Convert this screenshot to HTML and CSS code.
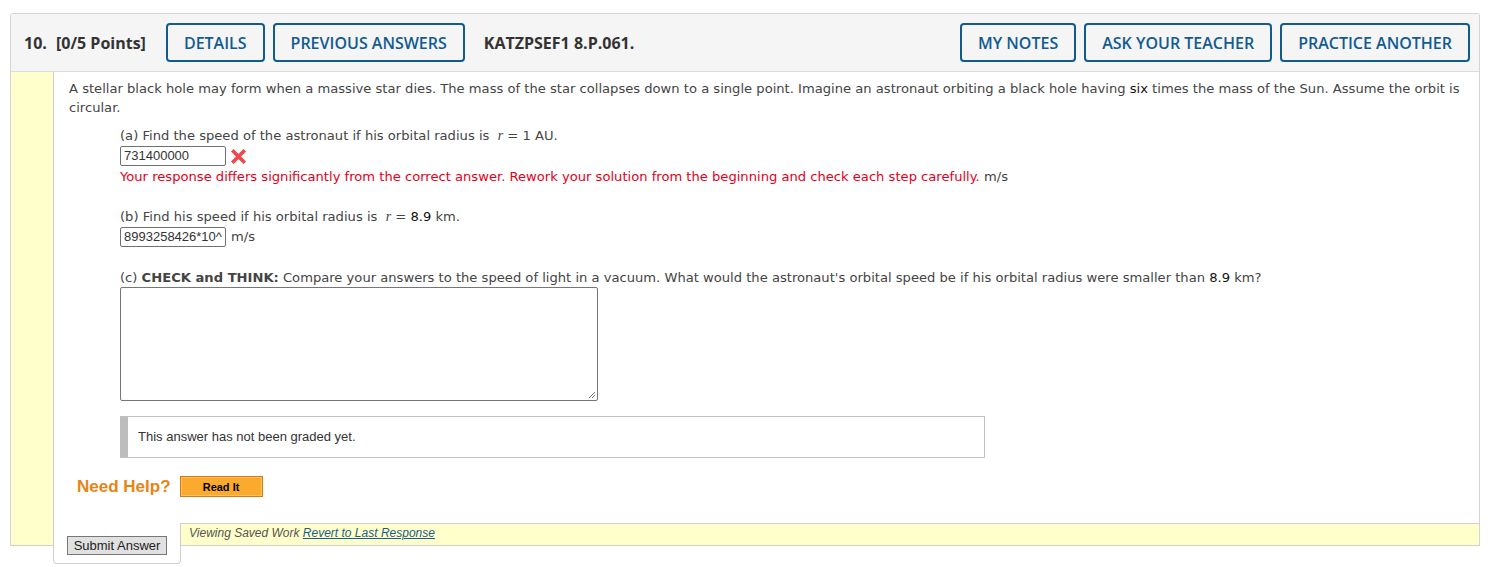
FILE: index.html
```html
<!DOCTYPE html>
<html>
<head>
<meta charset="utf-8">
<link rel="stylesheet" href="styles.css">
</head>
<body>
<div class="card">
  <div class="head">
    <div class="qnum">10.</div>
    <div class="points">[0/5 Points]</div>
    <button class="hbtn">DETAILS</button>
    <button class="hbtn">PREVIOUS ANSWERS</button>
    <div class="code">KATZPSEF1 8.P.061.</div>
    <div class="spacer"></div>
    <button class="hbtn">MY NOTES</button>
    <button class="hbtn">ASK YOUR TEACHER</button>
    <button class="hbtn">PRACTICE ANOTHER</button>
  </div>
  <div class="body">
    <div class="strip"></div>
    <div class="main">
      <div class="content">
        <p class="intro">A stellar black hole may form when a massive star dies. The mass of the star collapses down to a single point. Imagine an astronaut orbiting a black hole having <b class="val">six</b> times the mass of the Sun. Assume the orbit is circular.</p>
        <div class="part">
          <div class="line">(a) Find the speed of the astronaut if his orbital radius is &nbsp;<i class="var">r</i> = 1 AU.</div>
          <div class="answer">
            <span class="inp">731400000</span>
            <svg class="xicon" width="15" height="15" viewBox="0 0 15 15"><path d="M2.5 2.5 L12.5 12.5 M12.5 2.5 L2.5 12.5" stroke="#f0484a" stroke-width="3.6" stroke-linecap="square"/></svg>
          </div>
          <div class="err">Your response differs significantly from the correct answer. Rework your solution from the beginning and check each step carefully. <span class="unit">m/s</span></div>
        </div>
        <div class="part">
          <div class="line">(b) Find his speed if his orbital radius is &nbsp;<i class="var">r</i> = <b class="val">8.9</b> km.</div>
          <div class="answer">
            <span class="inp">8993258426*10^</span>
            <span class="unit">m/s</span>
          </div>
        </div>
        <div class="part">
          <div class="line">(c) <b>CHECK and THINK:</b> Compare your answers to the speed of light in a vacuum. What would the astronaut's orbital speed be if his orbital radius were smaller than <b class="val">8.9</b> km?</div>
          <div class="tarea"><svg class="grip" width="8" height="8" viewBox="0 0 8 8"><path d="M7 1 L1 7 M7 4 L4 7" stroke="#777" stroke-width="1"/></svg></div>
          <div class="graded">This answer has not been graded yet.</div>
        </div>
        <div class="help">
          <span class="needhelp">Need Help?</span>
          <button class="readit">Read It</button>
        </div>
      </div>
      <div class="foot">
        <div class="tab"><button class="submit">Submit Answer</button></div>
        <div class="saved">Viewing Saved Work <a href="#">Revert to Last Response</a></div>
      </div>
    </div>
  </div>
</div>
</body>
</html>
```
FILE: styles.css
```css
body {
  margin: 0;
  padding-bottom: 30px;
  background: #fff;
  font-family: "DejaVu Sans", Verdana, sans-serif;
}
.card {
  margin: 13px 12px 0 10px;
  border: 1px solid #d4d4d4;
  border-bottom: none;
  border-radius: 3px 3px 0 0;
}
.head {
  display: flex;
  align-items: center;
  background: #f5f5f5;
  border-bottom: 1px solid #dcdcdc;
  padding: 9px 9px 9px 13px;
  font-family: "Open Sans", sans-serif;
  color: #333;
}
.qnum {
  font-weight: 700;
  font-size: 16px;
  width: 32px;
}
.points {
  font-weight: 700;
  font-size: 16px;
  margin-right: 20px;
}
.hbtn {
  font-family: "Open Sans", sans-serif;
  font-weight: 600;
  font-size: 16px;
  color: #125b91;
  background: #fff0;
  border: 2px solid #115b8f;
  border-radius: 4px;
  height: 39px;
  padding: 0 16px;
  margin-right: 8px;
}
.code {
  font-weight: 700;
  font-size: 16px;
  margin-left: 11px;
}
.spacer { flex: 1; }
.head .hbtn:last-child { margin-right: 0; }
.body {
  display: flex;
}
.strip {
  width: 42px;
  background: #ffffcc;
  border-right: 1px solid #cfcfcf;
  border-bottom: 1px solid #cfcfcf;
  flex: none;
}
.main {
  flex: 1;
  display: flex;
  flex-direction: column;
}
.content {
  padding: 7px 15px 26px 15px;
  font-size: 13.12px;
  color: #444;
  line-height: 19px;
}
.intro { margin: 0 0 9px 0; }
.val { color: #111; font-weight: 400; }
.var { font-family: "Liberation Serif", serif; font-size: 14px; }
.part { margin-left: 51px; margin-bottom: 21px; }
.answer {
  display: flex;
  align-items: center;
  gap: 5px;
  height: 21px;
}
.inp {
  display: inline-block;
  box-sizing: border-box;
  width: 106px;
  height: 20px;
  border: 1px solid #707070;
  border-radius: 2px;
  font-family: "Liberation Sans", Arial, sans-serif;
  font-size: 13px;
  line-height: 18px;
  padding: 0 3px;
  color: #333;
  white-space: nowrap;
  overflow: hidden;
}
.xicon { margin-top: 2px; }
.err { color: #e3001a; margin-top: 1px; }
.err .unit { color: #444; }
.tarea {
  position: relative;
  box-sizing: border-box;
  width: 478px;
  height: 114px;
  border: 1px solid #767676;
  border-radius: 2px;
}
.grip { position: absolute; right: 1px; bottom: 1px; }
.graded {
  box-sizing: border-box;
  width: 865px;
  height: 42px;
  margin-top: 15px;
  border: 1px solid #c2c2c2;
  border-left: 8px solid #bdbdbd;
  padding: 11px 10px;
  font-family: "Liberation Sans", Arial, sans-serif;
  font-size: 13px;
  line-height: 18px;
  color: #333;
}
.help {
  display: flex;
  align-items: center;
  gap: 9px;
  margin-left: 8px;
  margin-top: -3px;
}
.needhelp {
  font-family: "Liberation Sans", Arial, sans-serif;
  font-weight: 700;
  font-size: 17px;
  color: #e88413;
}
.readit {
  font-family: "Liberation Sans", Arial, sans-serif;
  font-weight: 700;
  font-size: 11px;
  color: #000;
  width: 83px;
  height: 21px;
  background: #fbaa2e;
  border: 1px solid #d37a20;
  box-shadow: inset 0 0 0 1px #fdc15a;
  padding: 0;
}
.foot {
  display: flex;
  align-items: flex-start;
}
.tab {
  box-sizing: border-box;
  width: 128px;
  height: 41px;
  margin-bottom: -18px;
  margin-left: -1px;
  border-left: 1px solid #cfcfcf;
  border-right: 1px solid #cfcfcf;
  border-bottom: 1px solid #cfcfcf;
  border-radius: 0 0 4px 4px;
  background: #fff;
  padding: 12px 0 0 13px;
  position: relative;
}
.submit {
  font-family: "Liberation Sans", Arial, sans-serif;
  font-size: 13px;
  color: #222;
  background: #e1e1e1;
  border: 1px solid #777;
  height: 19px;
  width: 100px;
  padding: 0;
  line-height: 15px;
}
.saved {
  flex: 1;
  box-sizing: border-box;
  height: 23px;
  background: #ffffcc;
  border-top: 1px solid #cfcfcf;
  border-bottom: 1px solid #cfcfcf;
  border-right: 1px solid #d4d4d4;
  margin-right: -1px;
  font-family: "Liberation Sans", Arial, sans-serif;
  font-style: italic;
  font-size: 12px;
  color: #555;
  padding: 2px 8px;
}
.saved a { color: #1a5c8c; }
```
